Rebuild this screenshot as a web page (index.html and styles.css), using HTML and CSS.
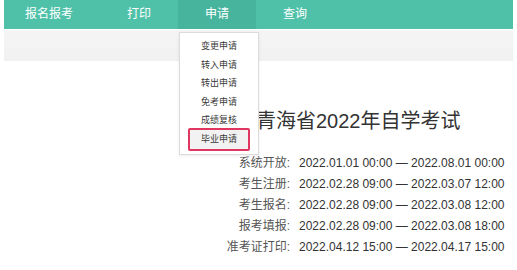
FILE: index.html
```html
<!DOCTYPE html>
<html lang="zh-CN">
<head>
    <meta charset="UTF-8">
    <meta name="viewport" content="width=device-width, initial-scale=1.0">
    <title>青海省2022年自学考试</title>
    <link rel="stylesheet" href="styles.css">
</head>
<body>
    <div class="page">
        <ul class="nav">
            <li class="nav-item first">报名报考</li>
            <li class="nav-item">打印</li>
            <li class="nav-item active">申请
                <ul class="dropdown">
                    <li>变更申请</li>
                    <li>转入申请</li>
                    <li>转出申请</li>
                    <li>免考申请</li>
                    <li>成绩复核</li>
                    <li class="marked">毕业申请</li>
                </ul>
            </li>
            <li class="nav-item">查询</li>
        </ul>
        <div class="subbar"></div>

        <div class="main">
            <h1 class="title">青海省2022年自学考试</h1>
            <div class="schedule">
                <span class="label">系统开放:</span><span class="value">2022.01.01 00:00 — 2022.08.01 00:00</span>
                <span class="label">考生注册:</span><span class="value">2022.02.28 09:00 — 2022.03.07 12:00</span>
                <span class="label">考生报名:</span><span class="value">2022.02.28 09:00 — 2022.03.08 12:00</span>
                <span class="label">报考填报:</span><span class="value">2022.02.28 09:00 — 2022.03.08 18:00</span>
                <span class="label">准考证打印:</span><span class="value">2022.04.12 15:00 — 2022.04.17 15:00</span>
            </div>
        </div>
    </div>
</body>
</html>
```

FILE: styles.css
```css
body {
    margin: 0;
    background: #fff;
    font-family: "Liberation Sans", "Noto Sans CJK SC", sans-serif;
    color: #333;
}

.page {
    padding: 0 4px;
}

.nav {
    display: flex;
    margin: 0;
    padding: 0;
    list-style: none;
    height: 29px;
    background-color: #4fc1a9;
}

.nav-item {
    position: relative;
    padding: 0 27px;
    line-height: 29px;
    font-size: 12px;
    color: #fff;
}

.nav-item.first {
    padding-left: 21px;
}

.nav-item.active {
    background-color: #47b59e;
}

.subbar {
    margin-top: 1px;
    height: 31px;
    background: linear-gradient(#f5f5f5, #f1f1f1);
}

.dropdown {
    position: absolute;
    top: 32px;
    left: 1px;
    z-index: 2;
    width: 78px;
    margin: 0;
    padding: 4px 0 5px;
    list-style: none;
    background: #fff;
    border: 1px solid #dcdcdc;
    box-shadow: 0 1px 3px rgba(0, 0, 0, 0.08);
    text-align: center;
}

.dropdown li {
    position: relative;
    height: 18.6px;
    line-height: 18.6px;
    font-size: 9px;
    color: #3a3a3a;
}

.dropdown li.marked {
    background: #f2f2f2;
    margin: 0 9px;
}

.dropdown li.marked::after {
    content: "";
    position: absolute;
    top: -2px;
    bottom: -2px;
    left: -1px;
    right: -1px;
    border: 2px solid #e0365f;
    border-radius: 2px;
}

.main {
    padding-top: 48px;
}

.title {
    margin: 0 0 20px 252px;
    font-size: 20px;
    font-weight: normal;
    line-height: 24px;
    color: #333;
}

.schedule {
    display: grid;
    grid-template-columns: 68px auto;
    column-gap: 9px;
    margin-left: 218px;
    font-size: 12px;
    line-height: 21px;
}

.label {
    text-align: right;
    color: #555;
}

.value {
    color: #333;
}
```
